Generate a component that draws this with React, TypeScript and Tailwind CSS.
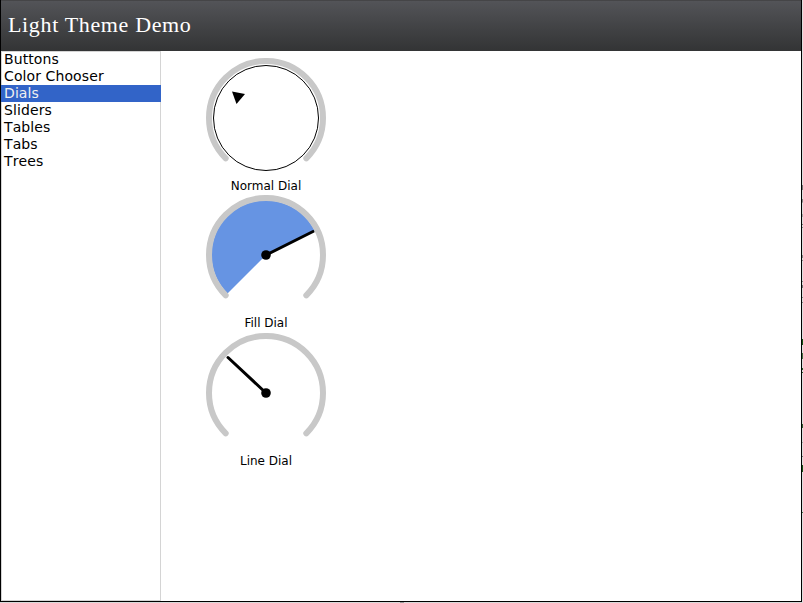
import React from 'react';

const items = ['Buttons', 'Color Chooser', 'Dials', 'Sliders', 'Tables', 'Tabs', 'Trees'];

// Marks of the window behind, seen along the right edge: [top, height, colour].
const marks: [number, number, string][] = [
  [185, 5, '#777777'], [199, 3, '#888888'], [202, 1, '#aaaaaa'], [214, 3, '#aaaaaa'],
  [224, 1, '#777777'], [227, 1, '#888888'], [255, 3, '#888888'], [260, 1, '#888888'],
  [281, 1, '#888888'], [285, 3, '#777777'], [297, 1, '#888888'], [302, 1, '#888888'],
  [339, 6, '#145214'], [353, 6, '#447044'], [368, 2, '#2c5a2c'], [372, 1, '#2c5a2c'],
  [424, 4, '#315e31'], [442, 1, '#aaaaaa'], [456, 1, '#777777'], [465, 7, '#145214'],
  [512, 1, '#40704a'],
];

function Dial({ label, children, className }: { label: string; children: React.ReactNode; className: string }) {
  return (
    <div className={`flex w-[120px] flex-col items-center ${className}`}>
      <svg width="120" height="120" viewBox="-60 -60 120 120" className="block">
        {children}
        <path d="M-40.3 40.3A57 57 0 1 1 40.3 40.3" fill="none" stroke="#c8c8c8" strokeWidth="6" strokeLinecap="round" />
      </svg>
      <div className="text-[12px] leading-[16px] whitespace-nowrap">{label}</div>
    </div>
  );
}

function Needle({ x, y }: { x: number; y: number }) {
  return (
    <>
      <line x1="0" y1="0" x2={x} y2={y} stroke="#000" strokeWidth="3" strokeLinecap="round" />
      <circle r="4.8" />
    </>
  );
}

export default function App() {
  return (
    <div className="flex h-[603px] w-[803px] flex-col bg-[#d9d9d9] font-['DejaVu_Sans',sans-serif] text-black">
      <div className="flex h-[602px]">
        <div className="flex w-[802px] flex-col border-x border-b border-black bg-white">
          <header className="flex h-[51px] shrink-0 items-center border-t border-[#454547] bg-linear-to-b from-[#535458] to-[#333435] pb-[2px] pl-[7px]">
            <h1 className="font-['Liberation_Serif',serif] text-[22px] leading-[26px] tracking-[0.65px] whitespace-nowrap text-white">Light Theme Demo</h1>
          </header>
          <main className="flex min-h-0 flex-1">
            <ul className="w-[160px] text-[14px] leading-[17px] tracking-[0.1px] inset-ring inset-ring-[#d4d4d4] [font-kerning:none]">
              {items.map((item) => (
                <li
                  key={item}
                  className={item === 'Dials' ? 'h-[17px] bg-[#3264c8] pl-[3px] text-[#f0f0f0]' : 'h-[17px] pl-[3px]'}
                >
                  {item}
                </li>
              ))}
            </ul>
            <section className="flex flex-col pt-[7px] pl-[45px]">
              <Dial label="Normal Dial" className="h-[137px]">
                <circle r="52.5" fill="none" stroke="#000" strokeWidth="1" />
                <path d="M-34 -26.5L-21 -24L-29.5 -14Z" />
              </Dial>
              <Dial label="Fill Dial" className="h-[138px]">
                <path d="M0 0L-38.5 38.5A54.5 54.5 0 1 1 48.7 -24.4Z" fill="#6694e3" />
                <Needle x={47} y={-23.5} />
              </Dial>
              <Dial label="Line Dial" className="h-[138px]">
                <Needle x={-38} y={-35.5} />
              </Dial>
            </section>
          </main>
        </div>
        <div className="relative w-px bg-[#dedede]">
          {marks.map(([top, height, color]) => (
            <span key={top} className="absolute left-0 w-px" style={{ top, height, backgroundColor: color }} />
          ))}
        </div>
      </div>
      <div className="flex h-px pl-[400px]">
        <span className="h-px w-1 bg-[#999999]" />
      </div>
    </div>
  );
}
